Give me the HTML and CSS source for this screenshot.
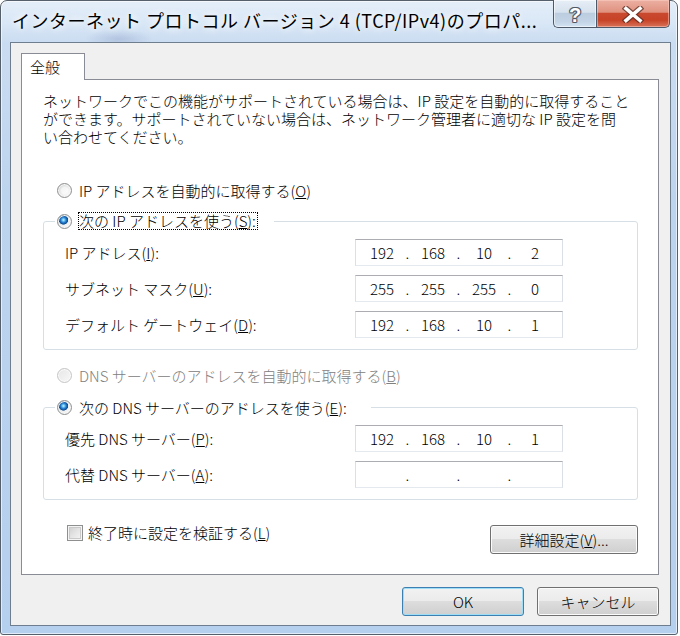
FILE: index.html
```html
<!DOCTYPE html>
<html lang="ja">
<head>
<meta charset="utf-8">
<title>インターネット プロトコル バージョン 4 (TCP/IPv4)のプロパティ</title>
<link rel="stylesheet" href="styles.css">
</head>
<body>
<div class="window">
  <div class="titlebar">
    <div class="title">インターネット プロトコル バージョン 4 (TCP/IPv4)のプロパ...</div>
    <div class="caption-buttons">
      <div class="cap-btn help"><span class="q">?</span></div>
      <div class="cap-btn close">
        <svg width="22" height="17" viewBox="0 0 22 17">
          <path d="M4 2.5 L18 14.5 M18 2.5 L4 14.5" stroke="#5b2c24" stroke-opacity="0.75" stroke-width="6" stroke-linecap="square"/>
          <path d="M4 2.5 L18 14.5 M18 2.5 L4 14.5" stroke="#ffffff" stroke-width="3.6" stroke-linecap="square"/>
        </svg>
      </div>
    </div>
  </div>
  <div class="client">
    <div class="tabs"><div class="tab">全般</div></div>
    <div class="panel">
      <p class="desc">ネットワークでこの機能がサポートされている場合は、IP 設定を自動的に取得すること<br>ができます。サポートされていない場合は、ネットワーク管理者に適切な IP 設定を問<br>い合わせてください。</p>

      <div class="option standalone first-opt"><span class="radio"></span><span>IP アドレスを自動的に取得する(<u>O</u>)</span></div>

      <fieldset class="group g1">
        <legend class="option legend l1"><span class="radio checked"></span><span class="focus">次の IP アドレスを使う(<u>S</u>):</span></legend>
        <div class="row"><span class="label">IP アドレス(<u>I</u>):</span>
          <div class="ipbox"><span class="oct">192</span><span class="dot">.</span><span class="oct">168</span><span class="dot">.</span><span class="oct">10</span><span class="dot">.</span><span class="oct">2</span></div></div>
        <div class="row"><span class="label">サブネット マスク(<u>U</u>):</span>
          <div class="ipbox"><span class="oct">255</span><span class="dot">.</span><span class="oct">255</span><span class="dot">.</span><span class="oct">255</span><span class="dot">.</span><span class="oct">0</span></div></div>
        <div class="row"><span class="label">デフォルト ゲートウェイ(<u>D</u>):</span>
          <div class="ipbox"><span class="oct">192</span><span class="dot">.</span><span class="oct">168</span><span class="dot">.</span><span class="oct">10</span><span class="dot">.</span><span class="oct">1</span></div></div>
      </fieldset>

      <div class="option standalone disabled-opt"><span class="radio disabled"></span><span>DNS サーバーのアドレスを自動的に取得する(<u>B</u>)</span></div>

      <fieldset class="group g2">
        <legend class="option legend l2"><span class="radio checked"></span><span>次の DNS サーバーのアドレスを使う(<u>E</u>):</span></legend>
        <div class="row"><span class="label">優先 DNS サーバー(<u>P</u>):</span>
          <div class="ipbox"><span class="oct">192</span><span class="dot">.</span><span class="oct">168</span><span class="dot">.</span><span class="oct">10</span><span class="dot">.</span><span class="oct">1</span></div></div>
        <div class="row"><span class="label">代替 DNS サーバー(<u>A</u>):</span>
          <div class="ipbox"><span class="oct"></span><span class="dot">.</span><span class="oct"></span><span class="dot">.</span><span class="oct"></span><span class="dot">.</span><span class="oct"></span></div></div>
      </fieldset>

      <div class="bottom-row">
        <div class="check-opt"><span class="checkbox"></span><span>終了時に設定を検証する(<u>L</u>)</span></div>
        <div class="btn advanced">詳細設定(<u>V</u>)...</div>
      </div>
    </div>
    <div class="buttons">
      <div class="btn default">OK</div>
      <div class="btn">キャンセル</div>
    </div>
  </div>
</div>
</body>
</html>
```
FILE: styles.css
```css
* { box-sizing: border-box; }
html, body { margin: 0; padding: 0; }
body {
  width: 680px;
  height: 636px;
  overflow: hidden;
  background: #ffffff;
  font-family: "Noto Sans CJK JP", "Noto Sans", sans-serif;
  font-size: 15px;
  font-weight: 300;
  color: #000;
}
u { text-decoration: underline; text-underline-offset: 1px; }

.window {
  width: 678px;
  height: 635px;
  border: 1px solid #56606c;
  border-radius: 7px 7px 3px 3px;
  display: flex;
  flex-direction: column;
  background:
    radial-gradient(ellipse 34px 10px at 118px 38px, rgba(80, 105, 160, 0.22), rgba(80, 105, 160, 0) 100%),
    linear-gradient(to bottom, #e4eef9 0px, #d9e7f6 22px, #cadcf1 42px, #bdd4ee 200px, #b5cfee 100%);
  box-shadow: inset 0 0 0 1px rgba(255, 255, 255, 0.6);
}

.titlebar {
  flex: none;
  height: 41px;
  display: flex;
  align-items: flex-start;
}
.title {
  padding: 6px 0 0 11px;
  font-size: 18px;
  font-weight: 400;
  letter-spacing: 0.5px;
  line-height: 26px;
  white-space: nowrap;
  text-shadow: 0 0 6px #ffffff, 0 0 10px rgba(255, 255, 255, 0.9);
}
.caption-buttons {
  margin-left: auto;
  margin-right: 7px;
  margin-top: -1px;
  display: flex;
}
.cap-btn {
  height: 28px;
  display: flex;
  align-items: center;
  justify-content: center;
  border: 1px solid #4d5968;
  border-top: none;
}
.help {
  width: 43px;
  border-right: none;
  border-radius: 0 0 0 5px;
  background: linear-gradient(to bottom, #e7eef6 0%, #d6e2ee 45%, #bccddf 50%, #c2d4e6 80%, #d4e3f2 100%);
  box-shadow: inset 0 0 0 1px rgba(255, 255, 255, 0.55);
}
.q {
  font-family: "Liberation Sans", "DejaVu Sans", sans-serif;
  font-weight: bold;
  font-size: 20px;
  line-height: 20px;
  color: #ffffff;
  margin-top: 2px;
  text-shadow: -1px 0 0 #4e5864, 1px 0 0 #4e5864, 0 -1px 0 #4e5864, 0 1px 0 #4e5864,
               -1px -1px 0 #6e7884, 1px 1px 0 #6e7884, 1px -1px 0 #6e7884, -1px 1px 0 #6e7884;
}
.close {
  width: 74px;
  border-radius: 0 0 5px 0;
  background: linear-gradient(to bottom, #ebb0a2 0%, #e0917f 45%, #c9492f 50%, #c74328 75%, #d8735a 100%);
  box-shadow: inset 0 0 0 1px rgba(255, 210, 200, 0.5);
}
.close svg { margin-top: 2px; }

.client {
  flex: 1;
  margin: 0 6px 8px 9px;
  border: 1px solid #6e7e8f;
  background: #f0f0f0;
  padding: 10px 11px 9px 10px;
  display: flex;
  flex-direction: column;
}

.tabs {
  display: flex;
  position: relative;
  z-index: 1;
  margin-bottom: -1px;
}
.tab {
  width: 64px;
  height: 27px;
  border: 1px solid #898c95;
  border-bottom: none;
  background: #ffffff;
  padding-left: 8px;
  display: flex;
  align-items: center;
  line-height: 16px;
}

.panel {
  height: 496px;
  border: 1px solid #898c95;
  background: #ffffff;
}

.desc {
  margin: 12px 0 0 21px;
  line-height: 18px;
  white-space: nowrap;
}

.option {
  display: flex;
  align-items: center;
  gap: 7px;
  height: 20px;
  white-space: nowrap;
}
.standalone { padding-left: 35px; }
.first-opt { margin-top: 34px; }
.disabled-opt { margin-top: 15px; color: #808080; }

.radio {
  flex: none;
  width: 15px;
  height: 15px;
  border-radius: 50%;
  border: 1px solid #8e8f8f;
  background:
    radial-gradient(circle at 50% 50%, rgba(255,255,255,0.6) 0, rgba(255,255,255,0.6) 3px, rgba(255,255,255,0) 5px),
    linear-gradient(135deg, #cfd0d1 0%, #eeeeee 55%, #fcfcfc 100%);
  box-shadow: inset 0 0 0 1px #f6f6f6;
}
.radio.checked {
  background:
    radial-gradient(circle at 42% 38%, #d8f4ff 0, #63bdf0 1.4px, #2379c9 2.8px, #0f4d8e 4.3px, rgba(15,77,142,0) 5px),
    linear-gradient(135deg, #cfd0d1 0%, #eeeeee 55%, #fcfcfc 100%);
}
.radio.disabled {
  border-color: #c5c5c5;
  background: linear-gradient(135deg, #e6e6e6, #f8f8f8);
  box-shadow: inset 0 0 0 1px #fafafa;
}

.group {
  margin: 11px 19px 0 21px;
  width: 595px;
  border: 1px solid #d5dfe5;
  border-radius: 3px;
  padding: 8px 0 11px 0;
  min-width: 0;
}
.g2 { margin-top: 12px; }
.legend {
  margin-left: 11px;
  padding: 0 16px 0 2px;
}
.l2 { padding-right: 24px; }
.focus {
  border: 1px dotted #000000;
  padding: 0 1px 0 0;
  line-height: 16px;
  margin-left: -1px;
}

.row {
  display: flex;
  align-items: center;
  height: 27px;
  padding-left: 21px;
  white-space: nowrap;
}
.row + .row { margin-top: 9px; }
.label { width: 290px; flex: none; }

.ipbox {
  width: 208px;
  height: 27px;
  display: flex;
  align-items: center;
  padding-left: 7px;
  border: 1px solid #dbdfe6;
  border-top-color: #abadb3;
  border-bottom-color: #e3e9ef;
  background: #ffffff;
}
.oct { width: 38px; text-align: center; }
.dot { width: 13px; text-align: center; }

.bottom-row {
  margin: 25px 20px 0 45px;
  display: flex;
  justify-content: space-between;
  align-items: flex-start;
}
.check-opt {
  display: flex;
  align-items: center;
  gap: 5px;
  height: 17px;
  margin-top: -1px;
  white-space: nowrap;
}
.checkbox {
  flex: none;
  width: 16px;
  height: 16px;
  border: 1px solid #8e8f8f;
  background: linear-gradient(135deg, #cbcbcb 0%, #e4e4e4 50%, #f7f7f7 100%);
  box-shadow: inset 0 0 0 1px #f4f4f4, inset 0 0 0 2px #c9c9c9;
}

.btn {
  height: 29px;
  width: 122px;
  border: 1px solid #707070;
  border-radius: 3px;
  background: linear-gradient(to bottom, #f2f2f2 0%, #ebebeb 49%, #dddddd 50%, #cfcfcf 100%);
  box-shadow: inset 0 0 0 1px #fbfbfb;
  display: flex;
  align-items: center;
  justify-content: center;
  white-space: nowrap;
  line-height: 16px;
}
.advanced { width: 148px; }
.btn.default {
  border-color: #3c7fb1;
  box-shadow: inset 0 0 0 1px #9fdcf6;
}

.buttons {
  display: flex;
  justify-content: flex-end;
  gap: 13px;
  margin-top: 12px;
}
```
